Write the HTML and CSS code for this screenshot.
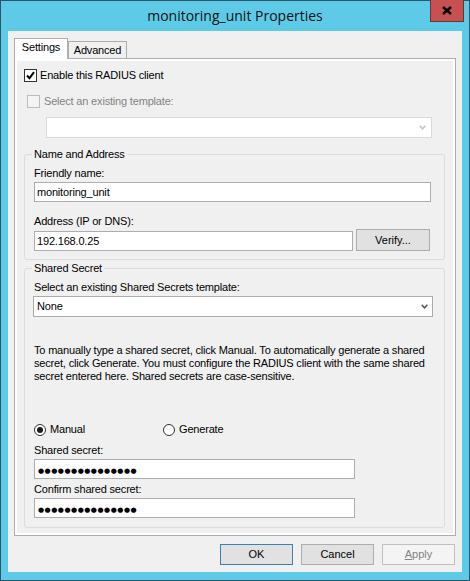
FILE: index.html
```html
<!DOCTYPE html>
<html lang="en">
<head>
    <meta charset="UTF-8">
    <title>monitoring_unit Properties</title>
    <link rel="stylesheet" href="styles.css">
</head>
<body>
    <div class="window">
        <div class="titlebar">
            <span class="title">monitoring_unit Properties</span>
            <span class="close">
                <svg width="10" height="9" viewBox="0 0 10 9"><path d="M1 1L9 8M9 1L1 8" stroke="#000" stroke-width="2.4" fill="none"/></svg>
            </span>
        </div>
        <div class="client">
            <div class="tabs">
                <div class="tab tab-active">Settings</div>
                <div class="tab tab-adv">Advanced</div>
            </div>
            <div class="page">
                <div class="page-body">
                    <div class="check check-enable">
                        <span class="box">
                            <svg width="11" height="11" viewBox="0 0 11 11"><path d="M2 5.5l2.5 2.6L9 2.2" stroke="#000" stroke-width="2" fill="none"/></svg>
                        </span>
                        <span>Enable this RADIUS client</span>
                    </div>
                    <div class="check check-template">
                        <span class="box box-disabled"></span>
                        <span>Select an existing template:</span>
                    </div>
                    <div class="combo combo-disabled">
                        <svg class="chevron" width="7" height="5" viewBox="0 0 7 5"><path d="M0.7 0.8L3.5 3.8L6.3 0.8" stroke="#c4c4c4" stroke-width="1.6" fill="none"/></svg>
                    </div>

                    <fieldset class="group group-name">
                        <legend>Name and Address</legend>
                        <div class="field-label">Friendly name:</div>
                        <div class="textbox textbox-wide">monitoring_unit</div>
                        <div class="field-label label-gap">Address (IP or DNS):</div>
                        <div class="address-row">
                            <div class="textbox textbox-address">192.168.0.25</div>
                            <button class="btn btn-verify">Verify...</button>
                        </div>
                    </fieldset>

                    <fieldset class="group group-secret">
                        <legend>Shared Secret</legend>
                        <div class="field-label">Select an existing Shared Secrets template:</div>
                        <div class="combo combo-secret">
                            <span>None</span>
                            <svg class="chevron" width="7" height="5" viewBox="0 0 7 5"><path d="M0.7 0.8L3.5 3.8L6.3 0.8" stroke="#5a5a5a" stroke-width="1.6" fill="none"/></svg>
                        </div>
                        <p class="hint">To manually type a shared secret, click Manual. To automatically generate a shared<br>secret, click Generate. You must configure the RADIUS client with the same shared<br>secret entered here. Shared secrets are case-sensitive.</p>
                        <div class="radio-row">
                            <div class="radio radio-manual"><span class="dot dot-on"></span>Manual</div>
                            <div class="radio"><span class="dot"></span>Generate</div>
                        </div>
                        <div class="field-label label-small-gap">Shared secret:</div>
                        <div class="textbox textbox-secret"><span class="mask">●●●●●●●●●●●●●●●</span></div>
                        <div class="field-label label-confirm">Confirm shared secret:</div>
                        <div class="textbox textbox-secret"><span class="mask">●●●●●●●●●●●●●●●</span></div>
                    </fieldset>
                </div>
            </div>
            <div class="buttons">
                <button class="btn btn-default">OK</button>
                <button class="btn">Cancel</button>
                <button class="btn btn-disabled"><u>A</u>pply</button>
            </div>
        </div>
    </div>
</body>
</html>
```

FILE: styles.css
```css
* {
    box-sizing: border-box;
}
body {
    margin: 0;
    font-family: "Liberation Sans", Arial, sans-serif;
    font-size: 11px;
    line-height: 13px;
    letter-spacing: -0.18px;
    color: #000;
}
.window {
    position: relative;
    width: 470px;
    height: 581px;
    border: 1px solid #2d5566;
    background: #5dcbe7;
    padding: 0 7px 8px;
    display: flex;
    flex-direction: column;
}
.titlebar {
    height: 30px;
    display: flex;
    align-items: center;
    justify-content: center;
}
.title {
    font-family: "Open Sans", sans-serif;
    font-size: 14px;
    line-height: 18px;
    letter-spacing: 0;
    color: #111;
}
.close {
    position: absolute;
    top: -1px;
    right: 5px;
    width: 34px;
    height: 22px;
    background: #c75050;
    border: 1px solid #6b3333;
    border-top: none;
    display: flex;
    align-items: center;
    justify-content: center;
}
.client {
    flex: 1;
    background: #f0f0f0;
    padding: 0 6px;
    display: flex;
    flex-direction: column;
}
.tabs {
    height: 28px;
    display: flex;
    align-items: flex-end;
}
.tab {
    border: 1px solid #adadad;
    border-bottom: none;
    background: #f0f0f0;
    text-align: center;
}
.tab-active {
    position: relative;
    z-index: 1;
    width: 54px;
    height: 21px;
    padding-top: 2px;
    background: #fff;
}
.tab-adv {
    width: 59px;
    height: 18px;
    padding-top: 2px;
}
.page {
    height: 478px;
    margin-top: -1px;
    border: 1px solid #adadad;
    background: #fff;
    padding: 2px;
}
.page-body {
    height: 100%;
    background: #f0f0f0;
    padding: 8px 0 0 7px;
}
.check {
    display: flex;
    align-items: center;
    height: 13px;
    gap: 3px;
}
.box {
    width: 13px;
    height: 13px;
    border: 1px solid #333;
    background: #fff;
    display: flex;
}
.check-template {
    margin: 13px 0 0 3px;
    gap: 4px;
    color: #838383;
}
.box-disabled {
    border-color: #bcbcbc;
    background: #f4f4f4;
}
.combo {
    height: 21px;
    background: #fff;
    display: flex;
    align-items: center;
}
.combo-disabled {
    width: 386px;
    margin: 9px 0 0 22px;
    border: 1px solid #d9d9d9;
    justify-content: flex-end;
    padding-right: 5px;
}
.group {
    width: 421px;
    margin: 10px 0 0;
    border: 1px solid #dcdcdc;
    border-radius: 3px;
    padding: 6px 9px 8px;
    min-inline-size: 0;
}
.group legend {
    padding: 0 2px;
    margin-left: -2px;
    line-height: 13px;
}
.group-secret {
    margin-top: 2px;
    padding-bottom: 9px;
}
.field-label {
    height: 13px;
}
.label-gap {
    margin-top: 13px;
}
.label-small-gap {
    margin-top: 8px;
}
.label-confirm {
    margin-top: 4px;
}
.textbox {
    height: 20px;
    margin-top: 2px;
    border: 1px solid #abadb3;
    background: #fff;
    padding: 0 2px;
    line-height: 18px;
}
.textbox-wide {
    width: 397px;
}
.address-row {
    margin-top: 1px;
    display: flex;
    align-items: flex-end;
    gap: 3px;
}
.textbox-address {
    width: 319px;
}
.textbox-secret {
    width: 321px;
    padding-left: 3px;
}
.mask {
    font-family: "DejaVu Sans", sans-serif;
    font-size: 7px;
    letter-spacing: 0.5px;
}
.btn {
    font: inherit;
    color: #000;
    height: 21px;
    border: 1px solid #adadad;
    background: #e1e1e1;
    padding: 0;
    line-height: 19px;
}
.btn-verify {
    width: 74px;
    height: 22px;
}
.combo-secret {
    width: 400px;
    margin: 2px 0 0 -1px;
    border: 1px solid #acacac;
    padding: 0 4px 0 3px;
    justify-content: space-between;
}
.hint {
    margin: 27px 0 0;
    white-space: nowrap;
}
.radio-row {
    margin-top: 40px;
    display: flex;
    height: 13px;
    align-items: center;
}
.radio {
    display: flex;
    align-items: center;
    gap: 4px;
}
.radio-manual {
    width: 129px;
}
.dot {
    width: 12px;
    height: 12px;
    border: 1px solid #333;
    border-radius: 50%;
    background: #fff;
    display: flex;
    align-items: center;
    justify-content: center;
}
.dot-on::after {
    content: "";
    width: 6px;
    height: 6px;
    border-radius: 50%;
    background: #1a1a1a;
}
.buttons {
    margin-top: 8px;
    padding-right: 1px;
    display: flex;
    justify-content: flex-end;
    gap: 8px;
}
.buttons .btn {
    width: 73px;
}
.btn-default {
    border-color: #3c7fb1;
}
.btn-disabled {
    background: #f4f4f4;
    border-color: #bfbfbf;
    color: #838383;
}
```
